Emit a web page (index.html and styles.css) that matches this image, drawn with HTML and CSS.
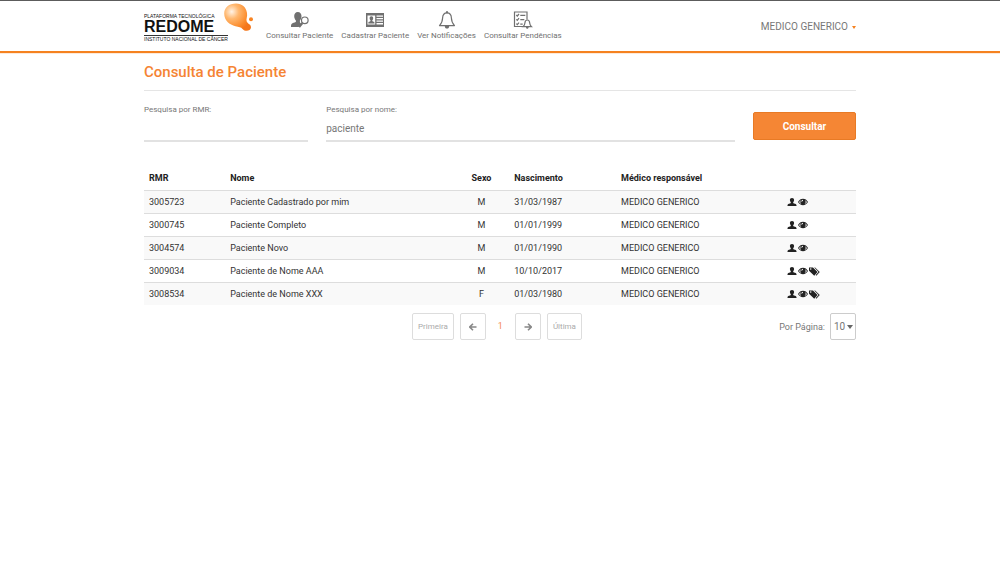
FILE: index.html
```html
<!DOCTYPE html>
<html lang="pt-BR">
<head>
<meta charset="utf-8">
<meta name="viewport" content="width=device-width, initial-scale=1">
<title>Consulta de Paciente</title>
<link rel="stylesheet" href="styles.css">
</head>
<body>
<svg class="sprite" aria-hidden="true">
  <symbol id="i-user" viewBox="0 0 18 16"><path d="M9 0C6.200 0 4.800 1.700 4.800 4.200c0 1.800.8 3.400 1.800 4.300v1.700C5.300 11.500 0 11.600 0 14.300V16h18v-1.700c0-2.700-5.300-2.800-6.600-4.100V8.500c1-.9 1.800-2.500 1.800-4.300C13.200 1.700 11.800 0 9 0z"/></symbol>
  <symbol id="i-eye" viewBox="0 0 20 16"><path d="M0 8.200C2.300 3.900 5.800 1.500 10 1.500s7.700 2.400 10 6.700c-2.300 4.100-5.800 6.300-10 6.300S2.300 12.300 0 8.200z"/><path fill="#fff" d="M2.200 8.300C3 6.800 4.200 5.500 5.500 4.700a5.500 5.500 0 0 0 1.100 7.200C4.800 11.200 3.300 10 2.200 8.300zm15.600 0c-.8-1.500-2-2.800-3.300-3.600a5.500 5.500 0 0 1-1.100 7.200c1.800-.7 3.300-1.900 4.400-3.600z"/><path fill="#fff" d="M10 3.700a3.700 3.700 0 0 0-3.300 3.700h1.600A2 2 0 0 1 10 5.400z"/></symbol>
  <symbol id="i-tags" viewBox="0 0 22 18"><path fill-rule="evenodd" d="M0 1h8l9 9-6.500 7.500L0 7.500V1zm3.500 1.700a1.500 1.500 0 1 0 0 3 1.500 1.500 0 0 0 0-3z"/><path d="M10.500 1h1.700l9.300 9-6.800 7.500-1.300-1.300L19 10z"/></symbol>
  <symbol id="i-left" viewBox="0 0 16 16"><path d="M8 1.500 1.500 8 8 14.500M2 8h13" fill="none" stroke="currentColor" stroke-width="3.200"/></symbol>
  <symbol id="i-right" viewBox="0 0 16 16"><path d="M8 1.500 14.500 8 8 14.500M14 8H1" fill="none" stroke="currentColor" stroke-width="3.200"/></symbol>
</svg>

<header class="topbar">
  <div class="container topbar-inner">
    <a class="logo" href="#">
      <span class="logo-words">
        <span class="logo-small">PLATAFORMA TECNOLÓGICA</span>
        <strong class="logo-name">REDOME</strong>
        <span class="logo-small logo-line">INSTITUTO NACIONAL DE CÂNCER</span>
      </span>
      <svg class="logo-mark" viewBox="0 0 31 30" aria-hidden="true">
        <defs>
          <radialGradient id="drop" cx="28%" cy="30%" r="75%">
            <stop offset="0" stop-color="#fff3e6"/><stop offset=".35" stop-color="#ffb870"/><stop offset=".8" stop-color="#fb8a2a"/><stop offset="1" stop-color="#f4761a"/>
          </radialGradient>
        </defs>
        <path fill="url(#drop)" d="M13 1.500C6 1.500 1.200 5.500 1.200 11.500c0 7 5.300 11.300 11.300 12.700 3.500.8 5.500.8 7 2.700 2.500 3 8 2.300 8.500-1.400.3-3.300-3.300-3.500-4.300-6-.9-2.200 1-4.700.3-8.500C23 5 19 1.500 13 1.500z"/>
        <circle fill="#f98422" cx="28" cy="17.200" r="2"/>
      </svg>
    </a>
    <nav class="menu">
      <a class="menu-item" href="#">
        <svg class="menu-icon" viewBox="0 0 20 18" aria-hidden="true"><path fill="currentColor" d="M7.800 1C5.500 1 4.200 2.700 4.200 5c0 1.900.8 3.600 1.700 4.500v1.300C4.500 12 1 11.800 1 15v1h7.500l2.700-3c-.6-.5-1.300-1-1.300-1.900V9.500c.9-.9 1.600-2.600 1.600-4.500 0-2.300-1.400-4-3.700-4z"/><circle cx="14.800" cy="9.300" r="3.300" fill="none" stroke="currentColor" stroke-width="1.200"/><path d="m12.300 12-3.300 4" stroke="currentColor" stroke-width="2.400"/></svg>
        <span>Consultar Paciente</span>
      </a>
      <a class="menu-item" href="#">
        <svg class="menu-icon" viewBox="0 0 20 18" aria-hidden="true"><path fill="currentColor" d="M1 2h18v14H1z"/><path fill="#fff" d="M2.500 4.500h7.700v9H2.500zM11.500 4.500H18v1.300h-6.500zM11.500 7H18v1.200h-6.500zM11.500 9.500H18v1.200h-6.500zM11.500 12H18v1.500h-6.500z"/><path fill="currentColor" d="M6.400 5.200c-1.200 0-1.800.9-1.800 2 0 .9.400 1.600.9 2v.9c-.6.700-2.200.6-2.200 1.800v.6h6.200v-.6c0-1.200-1.600-1.100-2.200-1.800v-.9c.5-.4.900-1.100.9-2 0-1.100-.6-2-1.800-2z"/></svg>
        <span>Cadastrar Paciente</span>
      </a>
      <a class="menu-item" href="#">
        <svg class="menu-icon" viewBox="0 0 20 18" aria-hidden="true"><path fill="none" stroke="currentColor" stroke-width="1.200" stroke-linejoin="round" d="M10 1.800C7 1.800 5.700 4 5.600 7c-.1 3.500-1 5.500-3.100 7.600h15C15.400 12.500 14.500 10.500 14.400 7c-.1-3-1.400-5.200-4.400-5.200z"/><path fill="currentColor" d="M9 .3h2v2H9zM7.800 15h4.400c0 1.700-.8 2.600-2.200 2.600S7.800 16.700 7.800 15z"/></svg>
        <span>Ver Notificações</span>
      </a>
      <a class="menu-item" href="#">
        <svg class="menu-icon" viewBox="0 0 20 18" aria-hidden="true"><g fill="none" stroke="currentColor" stroke-width="1.200"><path d="M11 15.500H1.500V1h12.500v7.500"/><path d="m3.300 4 1 1 1.700-2M7.300 4.300h5m-9 4 1 1L6 7.200m1.300 1.500h4m-8 4 1 1L6 11.700m1.300 1.400h2.400"/><path fill="#fff" d="M14.300 9c-1.800 0-2.300 1.500-2.400 3-.1 1.700-.6 2.700-1.800 3.700h8.400c-1.200-1-1.700-2-1.800-3.700-.1-1.500-.6-3-2.400-3z"/></g><path fill="currentColor" d="M13 15.900h2.600c0 1.200-.5 1.800-1.300 1.800S13 17.100 13 15.900z"/></svg>
        <span>Consultar Pendências</span>
      </a>
    </nav>
    <button class="account" type="button">MEDICO GENERICO <span class="caret"></span></button>
  </div>
</header>

<main class="container">
  <h1 class="title">Consulta de Paciente</h1>

  <form class="search">
    <div class="field">
      <label for="rmr">Pesquisa por RMR:</label>
      <input id="rmr" type="text">
    </div>
    <div class="field">
      <label for="nome">Pesquisa por nome:</label>
      <input id="nome" type="text" value="paciente">
    </div>
    <button class="submit" type="button">Consultar</button>
  </form>

  <table class="results">
    <colgroup><col class="c-rmr"><col class="c-nome"><col class="c-sexo"><col class="c-nasc"><col class="c-med"><col class="c-acoes"></colgroup>
    <thead>
      <tr><th>RMR</th><th>Nome</th><th class="center">Sexo</th><th>Nascimento</th><th>Médico responsável</th><td></td></tr>
    </thead>
    <tbody>
      <tr><td>3005723</td><td>Paciente Cadastrado por mim</td><td class="center">M</td><td>31/03/1987</td><td>MEDICO GENERICO</td><td><div class="actions"><svg><use href="#i-user"/></svg><svg><use href="#i-eye"/></svg></div></td></tr>
      <tr><td>3000745</td><td>Paciente Completo</td><td class="center">M</td><td>01/01/1999</td><td>MEDICO GENERICO</td><td><div class="actions"><svg><use href="#i-user"/></svg><svg><use href="#i-eye"/></svg></div></td></tr>
      <tr><td>3004574</td><td>Paciente Novo</td><td class="center">M</td><td>01/01/1990</td><td>MEDICO GENERICO</td><td><div class="actions"><svg><use href="#i-user"/></svg><svg><use href="#i-eye"/></svg></div></td></tr>
      <tr><td>3009034</td><td>Paciente de Nome AAA</td><td class="center">M</td><td>10/10/2017</td><td>MEDICO GENERICO</td><td><div class="actions"><svg><use href="#i-user"/></svg><svg><use href="#i-eye"/></svg><svg class="tags"><use href="#i-tags"/></svg></div></td></tr>
      <tr><td>3008534</td><td>Paciente de Nome XXX</td><td class="center">F</td><td>01/03/1980</td><td>MEDICO GENERICO</td><td><div class="actions"><svg><use href="#i-user"/></svg><svg><use href="#i-eye"/></svg><svg class="tags"><use href="#i-tags"/></svg></div></td></tr>
    </tbody>
  </table>

  <div class="footer">
    <nav class="pager" aria-label="Paginação">
      <button type="button">Primeira</button>
      <button type="button" class="arrow" aria-label="Anterior"><svg><use href="#i-left"/></svg></button>
      <span class="current">1</span>
      <button type="button" class="arrow" aria-label="Próxima"><svg><use href="#i-right"/></svg></button>
      <button type="button">Última</button>
    </nav>
    <div class="per-page">
      <label for="por-pagina">Por Página:</label>
      <span class="select">
        <select id="por-pagina"><option>10</option><option>20</option><option>30</option></select>
        <span class="select-arrow"></span>
      </span>
    </div>
  </div>
</main>
</body>
</html>
```

FILE: styles.css
```css
* { box-sizing: border-box; }

body {
  margin: 0;
  background: #fff;
  color: #333;
  font-family: Roboto, "Liberation Sans", sans-serif;
  font-size: 9px;
  line-height: 12px;
}

button, input, select { font-family: inherit; color: inherit; }
a { color: inherit; text-decoration: none; }
.sprite { display: none; }

.container {
  width: 72%;
  max-width: 1170px;
  min-width: 712px;
  margin: 0 auto;
  padding: 0 4px;
}

/* Header */
.topbar {
  border-top: 1px solid #5c5c5c;
  border-bottom: 2px solid #f58220;
  box-shadow: 0 0 1px #f58220;
}
.topbar-inner {
  display: flex;
  align-items: flex-start;
  height: 50px;
}
.logo {
  display: flex;
  color: #111;
  font-family: "Liberation Sans", Arial, sans-serif;
}
.logo-words {
  display: flex;
  flex-direction: column;
  width: 84px;
  padding-top: 12px;
  white-space: nowrap;
}
.logo-small { font-size: 5px; line-height: 6px; }
.logo-name { font-size: 16px; line-height: 16px; }
.logo-line { border-top: 1px solid #333; }
.logo-mark { width: 31px; height: 30px; margin: 1px 0 0 -5px; }

.menu {
  display: flex;
  gap: 8px;
  margin-left: 12px;
  padding-top: 10px;
  color: #707070;
}
.menu-item {
  display: flex;
  flex-direction: column;
  align-items: center;
  gap: 1px;
  font-size: 8px;
  line-height: 12px;
}
.menu-icon { width: 20px; height: 18px; }

.account {
  display: flex;
  align-items: center;
  gap: 4px;
  margin: 19px 0 0 auto;
  padding: 0;
  border: 0;
  background: none;
  color: #777;
  font-size: 10px;
  line-height: 14px;
}
.caret {
  border: 2px solid transparent;
  border-top: 3px solid #f58220;
  border-bottom: 0;
}

/* Search */
.title {
  margin: 0;
  padding: 9px 0 8px;
  border-bottom: 1px solid #e5e5e5;
  color: #f58433;
  font-size: 15px;
  font-weight: 500;
  line-height: 20px;
}
.search {
  display: grid;
  grid-template-columns: 164fr 408fr 103fr;
  gap: 18px;
  padding-top: 14px;
  color: #777;
}
.field { display: flex; flex-direction: column; min-width: 0; }
.field label { font-size: 8px; line-height: 10px; }
.field input {
  width: 100%;
  height: 27px;
  padding: 1px 0 0;
  border: 0;
  border-bottom: 2px solid #e2e2e2;
  background: none;
  font-size: 10px;
  outline: 0;
}
.submit {
  height: 28px;
  margin-top: 7px;
  border: 1px solid #e87a25;
  border-radius: 2px;
  background: #f58634;
  color: #fff;
  font-size: 10px;
  font-weight: 700;
}

/* Results */
.results {
  width: 100%;
  margin-top: 24px;
  border-collapse: collapse;
  table-layout: fixed;
}
.c-rmr { width: 11.4%; }
.c-nome { width: 33.9%; }
.c-sexo { width: 6%; }
.c-nasc { width: 15%; }
.c-med { width: 23.3%; }
.c-acoes { width: 10.4%; }
.results th, .results td {
  height: 23px;
  padding: 1px 5px 0;
  text-align: left;
  white-space: nowrap;
}
.results th { height: 24px; color: #222; font-weight: 700; }
.results td { border-top: 1px solid #ddd; }
.results thead td { border: 0; }
.results thead { border-bottom: 1px solid #ccc; }
.results tbody tr:nth-child(odd) { background: #f9f9f9; }
.results .center { padding-right: 18px; text-align: center; }
.actions { display: flex; align-items: center; gap: 1px; }
.actions svg { width: 10px; height: 8px; fill: #222; }
.actions .tags { width: 11px; height: 9px; }

/* Pager */
.footer {
  display: grid;
  grid-template-columns: 1fr auto 1fr;
  align-items: center;
  padding-top: 8px;
  color: #777;
}
.pager { display: flex; grid-column: 2; gap: 6px; margin-right: 6px; }
.pager button {
  height: 27px;
  padding: 0 5px;
  border: 1px solid #ddd;
  border-radius: 2px;
  background: #fff;
  color: #aaa;
  font-size: 8px;
}
.pager .arrow {
  display: flex;
  align-items: center;
  justify-content: center;
  width: 26px;
  color: #888;
}
.pager svg { width: 8px; height: 8px; }
.current { width: 17px; color: #f58a5a; line-height: 26px; text-align: center; }
.per-page { display: flex; align-items: center; justify-content: flex-end; gap: 5px; }
.select { position: relative; display: flex; }
.select select {
  width: 26px;
  height: 27px;
  padding: 0 3px;
  border: 1px solid #ccc;
  border-radius: 2px;
  background: #fff;
  font-size: 10px;
  appearance: none;
}
.select-arrow {
  position: absolute;
  top: 12px;
  right: 3px;
  border: 3px solid transparent;
  border-top: 4px solid #666;
  border-bottom: 0;
  pointer-events: none;
}
```
